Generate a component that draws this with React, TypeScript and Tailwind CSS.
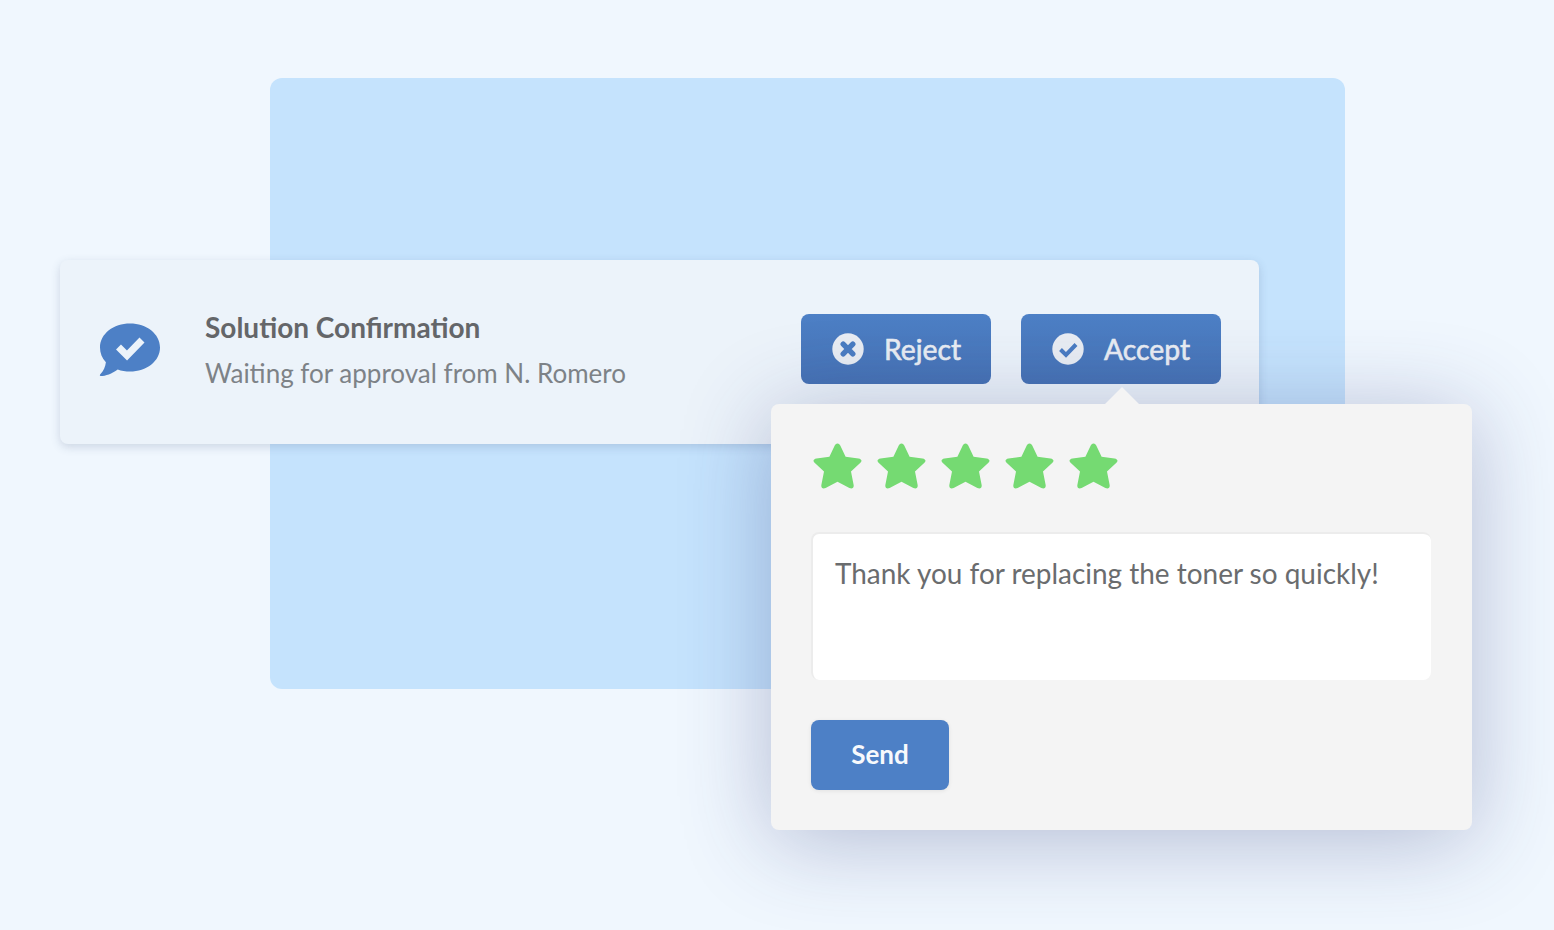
import React from "react";

function Star() {
  return (
    <svg width="50" height="47" viewBox="0 0 50 47" className="block shrink-0">
      <path
        d="M24.5 0.5 C26 0.5 26.8 1.5 27.4 2.8 L32.6 13.8 L45.5 15.5 C48.5 16 49.4 18 47.4 19.8 L38 28.6 L40.6 41.8 C41.2 45 39 46.3 36.4 45 L24.5 38.8 L12.6 45 C10 46.3 7.8 45 8.4 41.8 L11 28.6 L1.6 19.8 C-0.4 18 0.5 16 3.5 15.5 L16.4 13.8 L21.6 2.8 C22.2 1.5 23 0.5 24.5 0.5 Z"
        fill="#75da72"
      />
    </svg>
  );
}

function Bubble() {
  return (
    <svg width="62" height="54" viewBox="0 0 62 54" className="block shrink-0">
      <path
        d="M31 0.5 C47.5 0.5 61 10.8 61 24.5 C61 38.2 47.5 48.5 31 48.5 C26.6 48.5 22.4 47.8 18.7 46.4 C13 50.6 6.6 53 1.6 53 C0.8 53 0.6 52.2 1.1 51.6 C4.6 48.2 6.4 43.8 6.9 39.3 C3 35.2 1 30 1 24.5 C1 10.8 14.5 0.5 31 0.5 Z"
        fill="#4d80c6"
      />
      <path d="M19.5 24 L28 32.5 L43 17" fill="none" stroke="#ecf3fa" strokeWidth="7" />
    </svg>
  );
}

function XCircle() {
  return (
    <svg width="32" height="32" viewBox="0 0 32 32" className="block shrink-0">
      <circle cx="16" cy="16" r="15.7" fill="#e9edf3" />
      <path d="M11.2 11.2 L20.8 20.8 M20.8 11.2 L11.2 20.8" stroke="#4a7cc2" strokeWidth="5.4" strokeLinecap="round" />
    </svg>
  );
}

function CheckCircle() {
  return (
    <svg width="32" height="32" viewBox="0 0 32 32" className="block shrink-0">
      <circle cx="16" cy="16" r="15.7" fill="#e9edf3" />
      <path d="M8.5 16.5 L14 22 L24 11.5" fill="none" stroke="#4a7cc2" strokeWidth="4" />
    </svg>
  );
}

export default function App() {
  return (
    <div className="relative w-[1554px] h-[930px] overflow-hidden bg-[#f0f7fe] font-['Lato','Noto_Sans',sans-serif]">
      <div className="absolute left-[270px] top-[78px] w-[1075px] h-[611px] rounded-xl bg-[#c5e3fd]" />

      <div className="absolute left-[60px] top-[260px] w-[1199px] h-[184px] rounded-lg bg-[#ecf3fa] shadow-[0_3px_10px_rgba(60,80,120,0.2)] flex items-start pl-[39px] pr-[38px] pt-[54px]">
        <div className="mt-[9px] w-[106px] shrink-0">
          <Bubble />
        </div>
        <div className="flex-1 flex flex-col">
          <div className="text-[28px] leading-[30px] -mt-[2px] font-bold text-[#646669]">Solution Confirmation</div>
          <div className="mt-[15px] text-[26px] leading-[32px] text-[#7d8287]">Waiting for approval from N. Romero</div>
        </div>
        <div className="flex gap-[30px]">
          <div className="w-[190px] h-[70px] rounded-lg bg-gradient-to-b from-[#4d80c6] to-[#4672b4] flex items-center pl-[31px] gap-[20px] text-[28.3px] [-webkit-text-stroke:0.6px_#e9edf3] text-[#e9edf3]">
            <XCircle />
            <span>Reject</span>
          </div>
          <div className="w-[200px] h-[70px] rounded-lg bg-gradient-to-b from-[#4d80c6] to-[#4672b4] flex items-center pl-[31px] gap-[20px] text-[28.3px] [-webkit-text-stroke:0.6px_#e9edf3] text-[#e9edf3]">
            <CheckCircle />
            <span>Accept</span>
          </div>
        </div>
      </div>

      <div className="absolute left-[771px] top-[404px] w-[701px] h-[426px] rounded-lg bg-[#f4f4f4] shadow-[0_10px_90px_rgba(50,60,120,0.32)] pl-[40px] pr-[40px] pt-[40px] flex flex-col items-start">
        <div className="absolute left-[334px] -top-[17px] w-0 h-0 border-l-[17px] border-r-[17px] border-b-[17px] border-l-transparent border-r-transparent border-b-[#f4f4f4]" />
        <div className="flex gap-[14px] ml-[2px] -mt-[1px]">
          <Star />
          <Star />
          <Star />
          <Star />
          <Star />
        </div>
        <div className="mt-[42px] w-[620px] h-[148px] rounded-lg bg-white border-t-2 border-l-2 border-[#ececec] pl-[22px] pt-[21px] text-[27.95px] leading-[36px] text-[#6a6c6e]">
          Thank you for replacing the toner so quickly!
        </div>
        <div className="mt-[40px] w-[138px] h-[70px] rounded-lg bg-[#4d80c6] flex items-center justify-center text-[26px] font-bold text-[#f7f9fc] shadow-[0_1px_4px_rgba(0,0,0,0.08)]">
          <span className="-mt-[2px]">Send</span>
        </div>
      </div>
    </div>
  );
}
